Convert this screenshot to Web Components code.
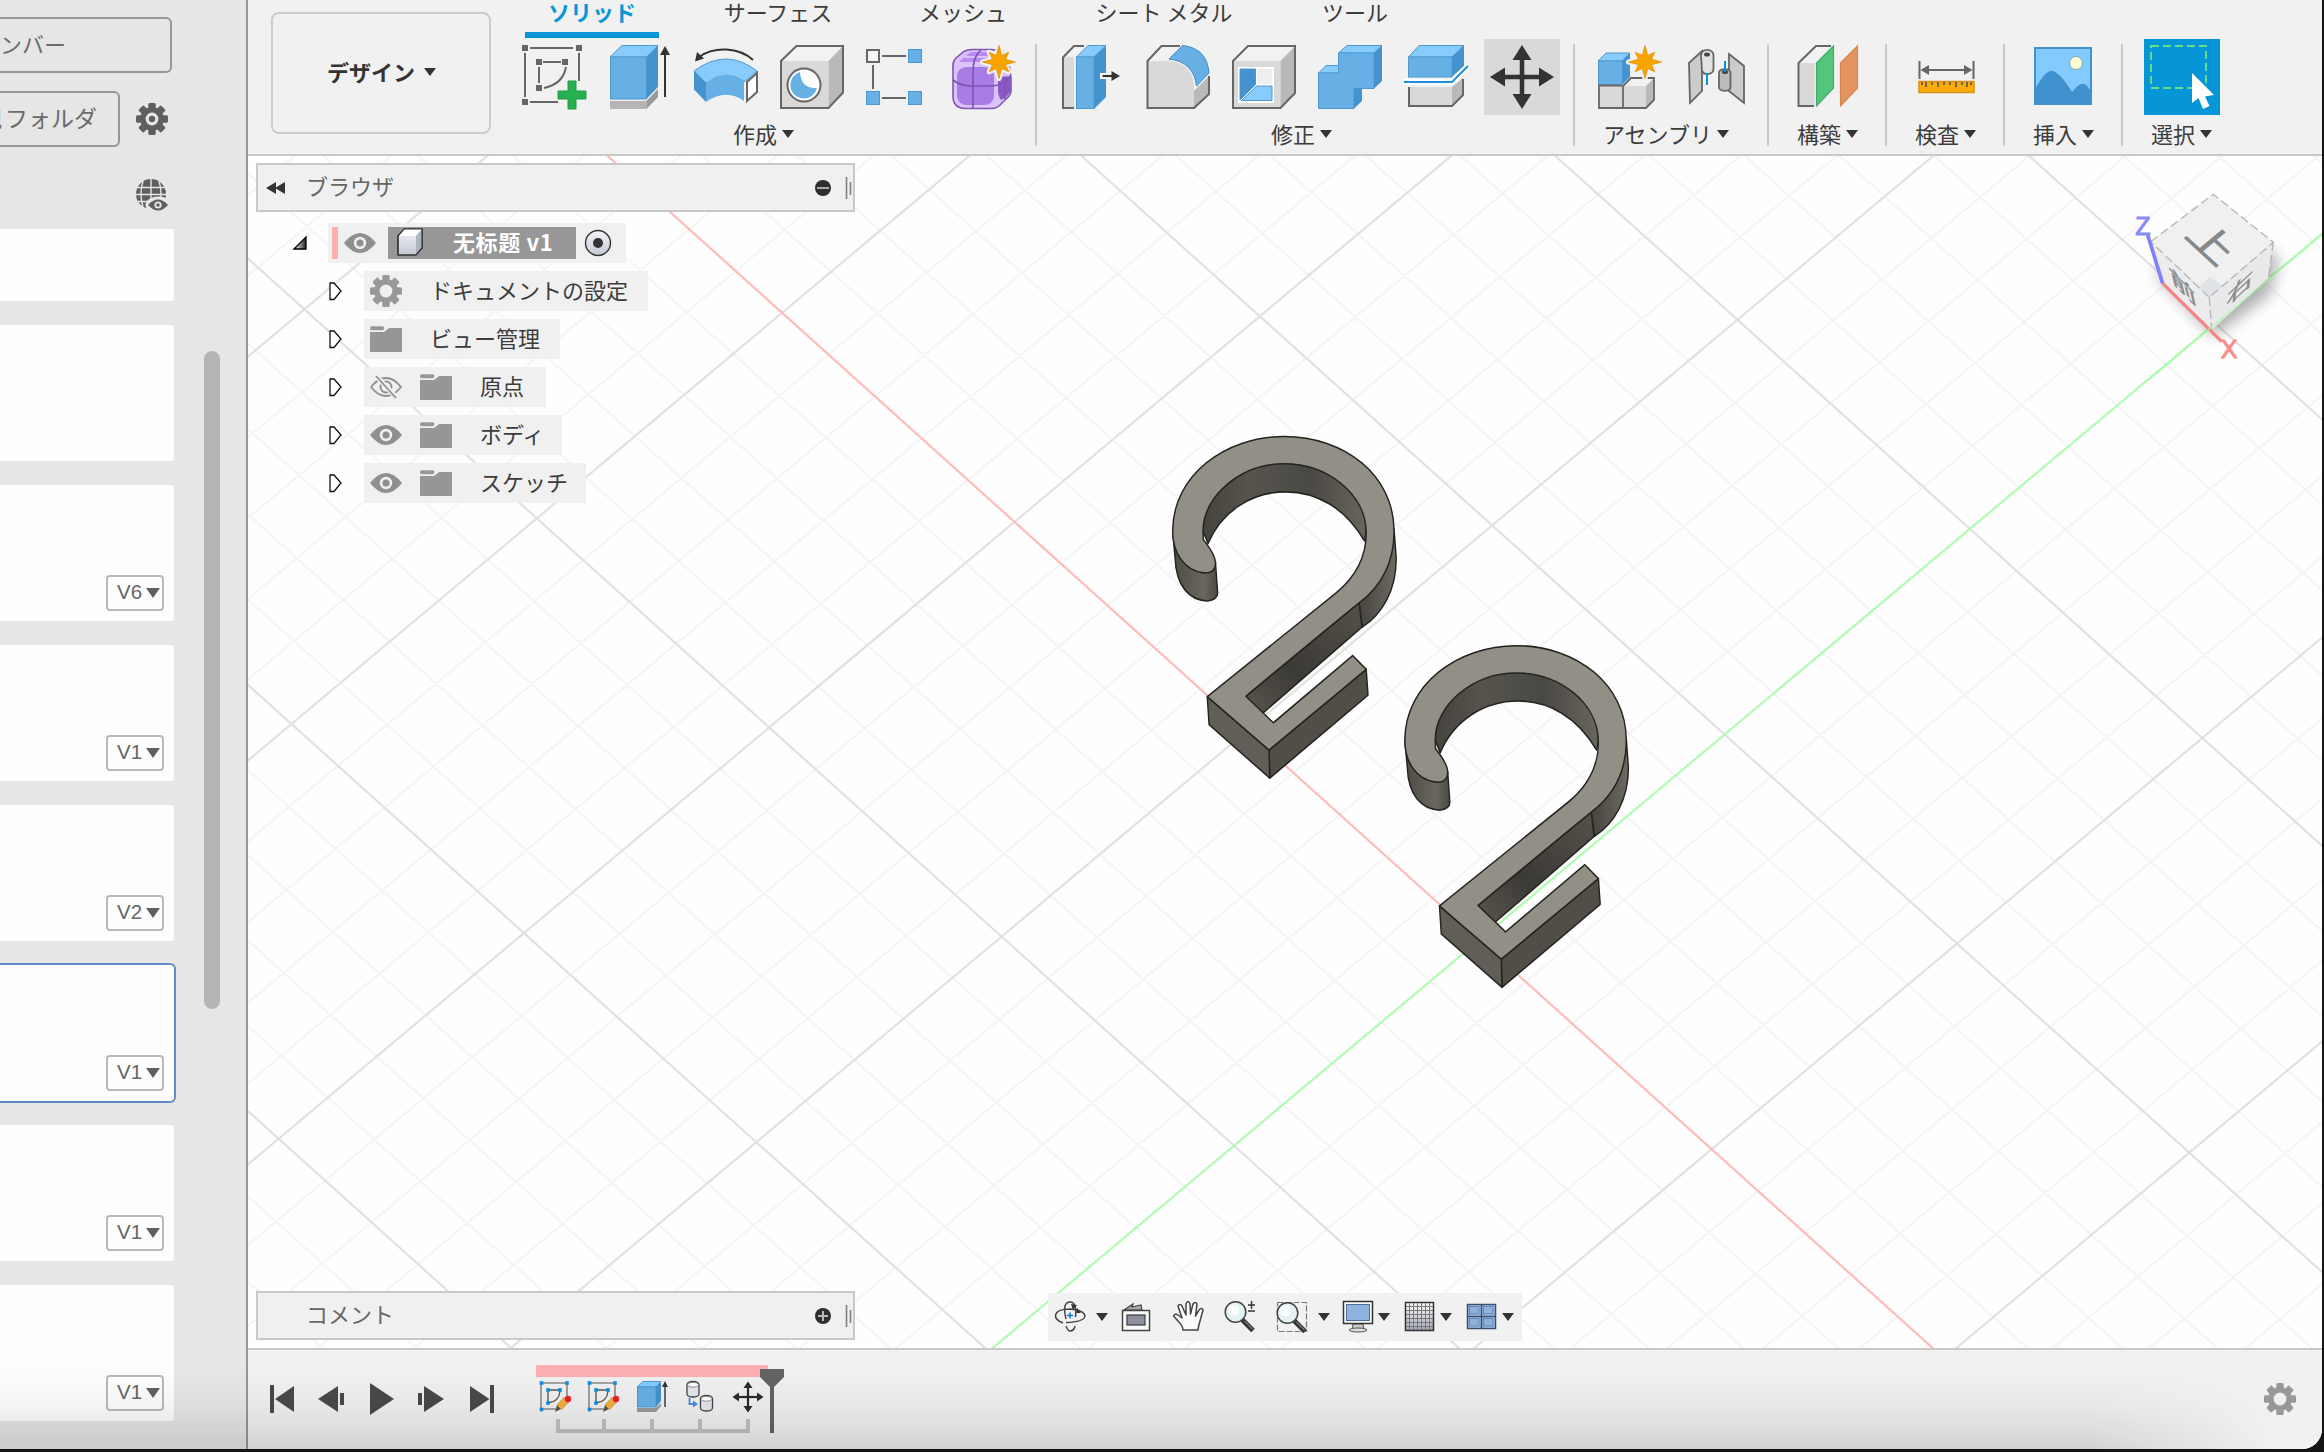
<!DOCTYPE html>
<html lang="ja">
<head>
<meta charset="utf-8">
<title>デザイン</title>
<style>
html,body{margin:0;padding:0;height:100%;overflow:hidden;background:#141414}
body{font-family:"Noto Sans CJK JP","Noto Sans",sans-serif;font-size:22px;color:#3c3c3c}
</style>
</head>
<body>
<cad-app></cad-app>
<script>
const define=(name,html,setup)=>customElements.define(name,class extends HTMLElement{
  connectedCallback(){
    if(this.shadowRoot)return;
    const t=document.createElement('template');
    t.innerHTML=typeof html==='function'?html(this):html;
    this.attachShadow({mode:'open'}).append(t.content.cloneNode(true));
    if(setup)setup(this,this.shadowRoot);
  }
});

/* ---------- drawing helpers ---------- */
const poly=(pts,fill,extra='')=>`<polygon points="${pts}" fill="${fill}" ${extra}/>`;
const rect=(x,y,w,h,fill,extra='')=>`<rect x="${x}" y="${y}" width="${w}" height="${h}" fill="${fill}" ${extra}/>`;
const line=(d,c='#666',w=2,extra='')=>`<path d="${d}" fill="none" stroke="${c}" stroke-width="${w}" ${extra}/>`;
const sq=(cx,cy,s,c)=>rect(cx-s/2,cy-s/2,s,s,c);
function star(cx,cy,R,r,n=8){
  let p='';
  for(let i=0;i<n*2;i++){const a=-Math.PI/2+i*Math.PI/n,k=i%2?r:(i%4?R*.84:R);p+=`${(cx+k*Math.cos(a)).toFixed(1)},${(cy+k*Math.sin(a)).toFixed(1)} `;}
  return poly(p,'#f9a300','stroke="#f1f1f1" stroke-width="5" stroke-linejoin="round"')+poly(p,'#f9a300','stroke="#e39200" stroke-width=".8"');
}
function gear(cx,cy,r,c,hole,ring){
  let t='';
  for(let i=0;i<8;i++)t+=`<rect x="${cx-r*.23}" y="${cy-r}" width="${r*.46}" height="${r}" rx="1.5" fill="${c}" transform="rotate(${i*45} ${cx} ${cy})"/>`;
  return t+`<circle cx="${cx}" cy="${cy}" r="${r*.74}" fill="${c}"/><circle cx="${cx}" cy="${cy}" r="${r*.4}" fill="${hole}"/>`+(ring?`<circle cx="${cx}" cy="${cy}" r="${r*.2}" fill="${c}"/>`:'');
}
const eye=(cx,cy,c='#8f8f8f',bg='#f0f0f0')=>`<path d="M${cx-16} ${cy}Q${cx-8} ${cy-10} ${cx} ${cy-10}T${cx+16} ${cy}Q${cx+8} ${cy+10} ${cx} ${cy+10}T${cx-16} ${cy}Z" fill="${c}"/><circle cx="${cx}" cy="${cy}" r="6.2" fill="${bg}"/><circle cx="${cx}" cy="${cy}" r="3.6" fill="${c}"/>`;
const tri=(x,y,w,h,c='#333')=>poly(`${x},${y} ${x+w},${y} ${x+w/2},${y+h}`,c);
const B='#67b0e6',BL='#88cbfd',BD='#4593ce',BS='stroke="#4d98d0" stroke-width="1"';
const G='#d9d9d9',GL='#f2f2f2',GD='#b9b9b9',K='#666';

const moveArrows=(cx,cy,R,hw,hl,t,c)=>{
  let s='';
  for(let i=0;i<4;i++)s+=`<g transform="rotate(${i*90} ${cx} ${cy})">${poly(`${cx},${cy-R} ${cx+hw},${cy-R+hl} ${cx-hw},${cy-R+hl}`,c)}${rect(cx-t/2,cy-R+hl-1,t,R-hl+1+t/2,c)}</g>`;
  return s;
};
const sketchSmall=x=>line(`M${x+1} 1383h26M${x+1} 1383v26h15M${x+27} 1383v14`,'#8a8a8a',1.6)
  +line(`M${x+8} 1390h12M${x+8} 1390v13Q${x+19} 1402 ${x+20} 1391`,'#555',1.3)
  +[[1.5,1383],[27,1383],[1.5,1409.5],[8,1390],[20,1390],[8,1403]].map(p=>sq(x+p[0],p[1],3.6,'#0d8fe0')).join('')
  +poly(`${x+15},1412 ${x+17},1405 ${x+21},1409`,'#555')+poly(`${x+17},1405 ${x+24.5},1397 ${x+29},1401.5 ${x+21.5},1409.5`,'#f3b13c','stroke="#c98a2a" stroke-width=".8"')
  +`<circle cx="${x+28}" cy="1399" r="3.2" fill="#e8222e"/>`;
const defsCube='<linearGradient id="cg" x2="0" y2="1"><stop stop-color="#f4f5f8"/><stop offset="1" stop-color="#c3c8d3"/></linearGradient>';
const lens=(cx,cy)=>`<path d="M${cx+7} ${cy+8}L${cx+17.5} ${cy+18.5}" stroke="#333" stroke-width="5"/><path d="M${cx+9} ${cy+9}L${cx+17} ${cy+17}" stroke="#777" stroke-width="1.5"/><circle cx="${cx}" cy="${cy}" r="10.3" fill="#e4f3f1" stroke="#444" stroke-width="1.5"/><circle cx="${cx-2}" cy="${cy-2}" r="5.5" fill="#fafdfd"/>`;

/* each entry: [viewBox, drawing] */
const ICONS={
 sketch:['500 39 98 76',
  line('M530 48H573M525 53V97M579 53V81M530 102H558M543 62H561M539 67V83M566 67Q563 84 544 88')+[[525,48],[579,48],[525,102],[539,62],[565,62],[539,88]].map(p=>sq(p[0],p[1],6,K)).join('')
  +poly('568,81 576,81 576,91 586,91 586,99 576,99 576,109 568,109 568,99 558,99 558,91 568,91','#27b050','stroke="#1f9a45" stroke-width="1"')],
 extrude:['598 39 84 76',
  poly('610,57 622,45.5 658,45.5 646.5,57',BL,BS)+rect(610.5,57,36,42,B,BS)+poly('646.5,57 658,45.5 658,87 646.5,99',BD)
  +rect(610,101,36.5,8,'#b5b5b5')+poly('646.5,101 658,89 658,97 646.5,109','#999')
  +line('M665 97V54','#333',2)+poly('665,46 670,55 660,55','#333')],
 revolve:['682 39 90 76',
  line('M753 60C739 47 714 46 699 57','#333',2)+poly('695,61.5 697,52 704,58.5','#333')
  +`<path d="M694 71Q726 47 757 71L745 81.5Q726 68 706 83Z" fill="${BL}" ${BS}/><path d="M706 83Q726 68 744 81.500V101Q726 88 706 102Z" fill="${B}"/>`
  +poly('694,71 706,83 706,102 694,89.500',BD)+poly('747,82 757,73 757,92 747,101','#fff','stroke="#666" stroke-width="2"')],
 hole:['772 39 86 76',
  poly('781,61 796,46 843,46 828,61',GL)+rect(781,61,47.5,47,G)+poly('828.5,61 843,46 843,92 828.5,108',GD)
  +line('M781 61L796.500 46H843V92.500L828.500 108H781Z')
  +`<circle cx="804" cy="85" r="17.500" fill="#666"/><circle cx="804" cy="85" r="15.500" fill="#fff"/><path d="M800 72A13.500 13.500 0 1 0 817 88Q801 89 800 72Z" fill="${B}"/>`],
 pattern:['858 39 80 76',
  line('M882 56H906M873 65V89M882 98H906')+rect(867,50,12,12,'#f6f6f6','stroke="#666" stroke-width="2"')
  +[[866.5,91.5],[908.5,49.5],[908.5,91.5]].map(p=>rect(p[0],p[1],13,13,B,BS)).join('')],
 form:['938 39 97 76',
  `<path d="M953 65Q953 61 956 58L964 51.500Q967 49.500 972 49.500H990Q1004 50 1008 56L1011 78V90Q1011 95 1007 98L999 106Q996 108.500 991 108.500H966Q953 108.500 953 96Z" fill="#dcc2fa" stroke="#7f55b5" stroke-width="1.600"/>
   <path d="M959 62L968 54Q970 52 974 52H990V62Z" fill="#b98bf2"/><path d="M965 57H992" stroke="#dcc2fa" stroke-width="2"/><rect x="957" y="67" width="37" height="38" rx="9" fill="#a97be4"/><path d="M998 77L1011 76V90Q1009 96 1001 100Q998 96 998 90Z" fill="#8a5ac4"/>
   <path d="M973 108V72Q973 56 981 50M953 80Q960 86 972 86H990Q1003 86 1011 77M1005 78V99" fill="none" stroke="#7f55b5" stroke-width="1.700"/>`+star(999,62,16.5,7)],
 presspull:['1037 39 96 76',
  poly('1063,57 1074,46 1085,46 1074,57',GL)+rect(1063,57,11,51,G)+line('M1074 108H1063V57.500L1074 46H1084')
  +poly('1076.5,57 1088,45.5 1106,45.500 1094,57',BL,BS)+rect(1076.5,57,17.5,51.5,B,BS)+poly('1094,57 1106,45.5 1106,97 1094,109',BD)
  +line('M1100 76H1114','#fff',6)+line('M1102.500 76H1113','#333',2.2)+poly('1111.5,71 1120,76 1111.5,81','#333')],
 fillet:['1133 39 86 76',
  `<path d="M1148 61L1161.500 46H1180L1167 60Z" fill="${GL}"/><path d="M1148 61H1168Q1194 63 1194 88V108H1148Z" fill="${G}"/><path d="M1194 91L1209 76V94L1194 108Z" fill="${GD}"/>`
  +line('M1180 46H1161.500L1147.500 61V108H1194L1209 94V76')+`<path d="M1169 59L1182.500 45.500Q1207 48 1209 73L1196.500 86Q1194 62 1169 59Z" fill="${B}" stroke="#3f8ac4" stroke-width="1"/>`],
 shell:['1219 39 86 76',
  poly('1233,61 1248,46 1295,46 1280,61',GL)+rect(1233,61,47.5,47,G)+poly('1280.500,61 1295,46 1295,93 1280.500,108',GD)
  +line('M1233 61L1248 46H1295V93L1280.500 108H1233Z')+rect(1238,67,36,36,'#fff')+rect(1257,69,15,15,'#eee')
  +poly('1240,69 1255.5,69 1255.5,84.500 1240,100',BD,BS)+poly('1256.5,86 1272,86 1272,100.500 1241.500,100.500',BL,BS)],
 combine:['1305 39 86 76',
  poly('1338.500,53 1347,45.500 1382,45.500 1374,53',BL,BS)+poly('1318.500,73 1326,65.500 1338.500,65.500 1338.500,73',BL,BS)
  +poly('1338.500,53 1374,53 1374,88.500 1354,88.500 1354,108.500 1318.500,108.500 1318.500,73 1338.500,73',B,BS)
  +poly('1374,53 1382,45.500 1382,81 1374,88.500',BD)+poly('1354,88.500 1362,88.500 1362,101 1354,108.500',BD)],
 split:['1391 39 85 76',
  poly('1408.500,57 1419,45.500 1464,45.500 1452,57',BL,BS)+rect(1408.500,57,43.500,20,B,BS)+poly('1452,57 1464,45.500 1464,66 1452,77',BD)
  +rect(1409,87,43,19,G)+poly('1452,87 1463,78 1463,95 1452,106',GD)+line('M1409 87V106H1452L1463 95V79')
  +line('M1404 82H1452L1468 66','#fff',6)+line('M1404 82H1452L1468 66','#1f8ee0',2)],
 move:['1476 39 97 76',rect(1484,39,76,76,'#d9d9d9')+moveArrows(1522,77,32,9.5,15,4.5,'#333')],
 component:['1575 39 99 76',
  poly('1598,61 1606,53 1630,53 1622,61',BL,BS)+rect(1598.500,61,24,24,B,BS)+poly('1622,61 1630,53 1630,77 1622,85',BD)
  +rect(1599,85,24,23,G)+poly('1623,86 1631,78 1654,78 1646,86',GL)+rect(1623,86,23,22,G)+poly('1646,86 1654,78 1654,100 1646,108',GD)
  +line('M1599 85V108H1646L1654 100V78H1631L1623 86V108M1599 85.500H1622','#666',1.8)+star(1645,62,16.5,7)],
 joint:['1674 39 93 76',
  poly('1689,63 1702,51 1702,91 1690,103','#ccc','stroke="#666" stroke-width="1.800"')+`<path d="M1701 55A6 5 0 0 1 1713.500 55V69A6 5 0 0 1 1702 71Z" fill="#e3e3e3" stroke="#666" stroke-width="1.800"/><ellipse cx="1707" cy="54.500" rx="3" ry="2" fill="#444"/>`
  +poly('1729,54 1744,66 1744,103 1729,91','#ccc','stroke="#666" stroke-width="1.800"')+`<path d="M1719 72A6 4 0 0 1 1730.500 72V88A6 4 0 0 1 1719 88Z" fill="#bbb" stroke="#666" stroke-width="1.800"/><ellipse cx="1725" cy="72" rx="3" ry="2" fill="#444"/>`
  +line('M1707 73V85M1725 61V72','#0a90dc',2)],
 construct:['1769 39 116 76',
  poly('1798.500,63 1816,46 1832,46 1815,63',GL)+rect(1798.500,63,16,43,G)+line('M1831 46H1816L1798.500 63V106H1814')
  +poly('1816.500,63 1833.500,46 1833.500,88 1816.500,106','#56c57c','stroke="#3fae66" stroke-width="1.200"')+poly('1840.500,63 1857.500,46 1857.500,88 1840.500,106','#e4955f','stroke="#d8834c" stroke-width="1.200"')],
 measure:['1887 39 116 76',
  line('M1919.500 61V79M1973.500 61V79')+line('M1925 70H1968')+poly('1920.500,70 1929,65 1929,75',K)+poly('1972.500,70 1964,65 1964,75',K)
  +rect(1919,81.500,55,11,'#fdab06','stroke="#d8921a" stroke-width="1.500"')+line('M1922 82V85M1926 82V87M1932 82V85M1938 82V87M1944 82V85M1950 82V85M1956 82V87M1962 82V85M1967 82V87M1971 82V85','#555',1.6)],
 insert:['2005 39 116 76',
  rect(2034.500,47.500,57,57,'#83cbff')+`<path d="M2035 89Q2046 69 2053 71Q2061 74 2072 92Q2080 82 2084 84Q2088 85 2092 94V105H2035Z" fill="#3f92ce"/>`
  +rect(2035,48,56,56,'none','stroke="#3f92ce" stroke-width="2"')+'<circle cx="2076" cy="63" r="6.500" fill="#fffed0" stroke="#7aabcb" stroke-width="1"/>'],
 select:['2123 39 196 76',
  rect(2144,39,76,76,'#0696d7')+line('M2151 46H2206V88H2151Z','#63dc8c',2,'stroke-dasharray="8 4"')+poly('2192,73 2214,95 2205,96.500 2209.500,106 2203,109 2198.500,98 2192,103','#fff')],
 gearSide:['136 103 32 32',gear(152,119,16,'#5f5f5f','#e6e6e6',true)],
 globe:['136 179 34 34',
  `<circle cx="151" cy="194" r="15" fill="#5f5f5f"/><path d="M136 187.500H166M136 194.500H166M138 201.500H164M151 179V209M143 181Q139 194 143 207M159 181Q163 194 159 207" fill="none" stroke="#e6e6e6" stroke-width="1.400"/><ellipse cx="158.500" cy="205" rx="13" ry="8.500" fill="#e6e6e6"/><path d="M148 205Q158 194 168 205Q158 216 148 205Z" fill="#5f5f5f"/><circle cx="158" cy="205" r="3.600" fill="#e6e6e6"/><circle cx="158" cy="205" r="1.800" fill="#5f5f5f"/>`],
 gearTree:['370 275 32 32',gear(386,291,16,'#989898','#f0f0f0')],
 gearEnd:['2264 1383 32 32',gear(2280,1399,16,'#989898','#efefef')],
 eye:['370 0 32 32',eye(386,16)],
 eyeOff:['370 0 32 32',line('M371 16Q378 7 386 7T401 16Q394 25 386 25T371 16','#8f8f8f',1.8)+`<circle cx="386" cy="16" r="5.500" fill="none" stroke="#8f8f8f" stroke-width="1.800"/>`+line('M376 5L397 27','#f0f0f0',5)+line('M376 5L396 27','#8f8f8f',1.8)],
 folder:['0 0 32 32','<path d="M0 7V29H32V5H19L14 9H0Z" fill="#969696"/><path d="M1 3H13L15 5L13 7.500H0V4Z" fill="#969696" stroke="#f0f0f0" stroke-width=".6"/>'],
 body:['395 227 30 32',defsCube+`<path d="M398 255V236L404 229H422V248L416 255Z" fill="url(#cg)" stroke="#333" stroke-width="1.200"/><path d="M404 229H422L416 236H398Z" fill="#fff"/><path d="M416 236L422 229V248L416 255Z" fill="#aeb4c2"/><path d="M398 255V236L404 229H422V248L416 255Z" fill="none" stroke="#333" stroke-width="1.200"/>`],
 radio:['584 228 28 28',defsCube+'<circle cx="598" cy="242" r="12.500" fill="url(#cg)" stroke="#333" stroke-width="1.400"/><circle cx="598" cy="242" r="5" fill="#333"/>'],
 orbit:['1048 1293 44 48',
  line('M1063 1323Q1055 1320 1055.500 1315Q1057 1309 1070 1309Q1084 1310 1085 1316Q1084 1322 1066 1322.500','#444',1.5)+line('M1066 1319Q1062 1302 1070 1302Q1077 1302 1075.500 1317M1066 1326Q1068 1331 1070 1331Q1074 1331 1075 1326','#444',1.5)
  +line('M1070 1312.500V1318.500M1067 1315.500H1073','#0b7fd6',1.6)+poly('1071,1304 1077,1305 1073,1310','#333')+poly('1077,1308 1081,1313 1076,1313','#333')],
 look:['1109 1293 54 48',
  poly('1124,1310 1133,1304 1132,1307 1141,1305 1142,1310','#aaa','stroke="#444" stroke-width="1.200"')+rect(1122.500,1310.500,27,20,'#fafafa','stroke="#444" stroke-width="1.500"')+rect(1127,1315,18,10,'#8b919d','stroke="#444" stroke-width="1.300"')],
 hand:['1163 1293 50 48','<path d="M1183 1330Q1183 1326 1178 1321L1173.500 1316Q1175 1313 1178 1315L1182 1318L1178 1306Q1180 1303 1182 1306L1186 1315L1186 1304Q1188 1299 1190 1304L1190.500 1314L1193 1304Q1195.500 1301 1197 1304L1195.500 1316L1199 1310Q1202 1307 1203 1310L1200 1321Q1198 1328 1198 1330Z" fill="#fbfbfb" stroke="#444" stroke-width="1.500" stroke-linejoin="round"/>'],
 zoom:['1213 1293 52 48',lens(1235.500,1312)+line('M1251.500 1301V1309M1248 1305H1255M1248 1311H1255','#333',1.4)],
 zoomWin:['1265 1293 49 48',rect(1277.500,1302.500,29,29,'none','stroke="#777" stroke-width="1.200" stroke-dasharray="6 2"')+lens(1287.500,1313)],
 monitor:['1334 1293 42 48',
  poly('1353,1324 1363,1324 1364,1330 1352,1330','#ccc','stroke="#555" stroke-width="1"')+'<ellipse cx="1358" cy="1330" rx="9" ry="2" fill="#ddd" stroke="#555" stroke-width="1"/>'+rect(1343.500,1301.500,29,22,'#fafafa','stroke="#333" stroke-width="1.500"')+rect(1346.500,1304.500,23,16,'#8fb2de','stroke="#4d6f9f" stroke-width="1"')],
 grid:['1394 1293 44 48',(()=>{let s='<linearGradient id="gg" x2="0" y2="1"><stop stop-color="#fff"/><stop offset="1" stop-color="#a5a8b4"/></linearGradient>'+rect(1405.500,1302.500,28,28,'url(#gg)','stroke="#333" stroke-width="1.500"');for(let i=1;i<7;i++)s+=line(`M${1405.5+i*4} 1303V1330M1406 ${1302.5+i*4}H1433`,'#777',1);return s})()],
 views:['1457 1293 43 48',
  rect(1467.500,1304.500,28,24,'#a7c2e4','stroke="#39506e" stroke-width="1.500"')+line('M1481.500 1305V1328M1468 1316.500H1495','#39506e',1.6)+[[1470,1307],[1484,1307],[1470,1319],[1484,1319]].map(p=>rect(p[0]-.5,p[1]-.5,9.500,7.500,'#8fb2dc','stroke="#5f86b8" stroke-width="1"')).join('')],
 tFirst:['270 1381 40 36',rect(270,1385,4,28,'#4a4a4a')+poly('275,1399 294,1386 294,1412','#4a4a4a')],
 tBack:['310 1381 46 36',poly('318,1399 338,1386 338,1412','#4a4a4a')+rect(340,1393,4,12,'#4a4a4a')],
 tPlay:['356 1381 50 36',poly('370,1383 394,1399 370,1415','#4a4a4a')],
 tFwd:['406 1381 50 36',rect(418,1393,4,12,'#4a4a4a')+poly('424,1386 444,1399 424,1412','#4a4a4a')],
 tLast:['456 1381 40 36',poly('470,1386 489.500,1399 470,1412','#4a4a4a')+rect(490,1385,4,28,'#4a4a4a')],
 history:['536 1361 256 76',
  rect(536,1365,232,12,'#fdaeb1')
  +sketchSmall(540)+sketchSmall(588)
  +poly('637,1387 643,1381.500 661,1381.500 656,1387',BL,BS)+rect(637.500,1387,18.500,20,B,BS)+poly('656,1387 661,1381.500 661,1401 656,1407',BD)+poly('637,1408 656,1408 661,1403 661,1406 656,1412 637,1412','#999')+line('M665 1407V1385','#333',1.4)+poly('665,1381 668,1387 662,1387','#333')
  +['687 1382','700.5 1396'].map(p=>{const [x,y]=p.split(' ').map(Number);return `<path d="M${x} ${y+2.500}A6 3 0 0 1 ${x+12} ${y+2.500}V${y+12}A6 3 0 0 1 ${x} ${y+12}Z" fill="#e6e7ec" stroke="#444" stroke-width="1.300"/><ellipse cx="${x+6}" cy="${y+2.800}" rx="5.500" ry="2.400" fill="#fff" stroke="#777" stroke-width=".8"/>`}).join('')
  +line('M689.500 1398V1404H694','#4a86e8',1.8)+poly('693,1400.500 698,1404 693,1407.500','#4a86e8')
  +moveArrows(748,1397,15.5,4.5,6.5,2.2,'#2b2b2b')
  +[556,602,650,698,746].map(x=>rect(x,1419,4,11,'#c1c1c1')).join('')+rect(556,1429,194,4,'#c1c1c1')
  +rect(770,1380,4,53,'#646464')+poly('760,1369 784,1369 784,1377 774,1387 770,1387 760,1377','#646464')],
 rewind:['266 181 20 16',poly('266,189 276,183 276,195','#333')+poly('275,189 285,183 285,195','#333')],
 minus:['815 180 16 16','<circle cx="823" cy="188" r="8" fill="#2e2e2e"/>'+rect(817,187,12,2,'#aaa')],
 plus:['815 180 16 16','<circle cx="823" cy="188" r="8" fill="#2e2e2e"/>'+rect(818,187,10,2,'#bbb')+rect(822,183,2,10,'#bbb')],
 grip:['846 176 8 24',line('M847.500 177V199M851.500 182V195','#808080',1.6)],
 caret:['0 0 12 8',tri(0,0,12,8)],
 caretS:['0 0 14 10',tri(0,0,14,10,'#606060')],
 closed:['329 280 14 22',poly('331,283 335,283 342,291 335,299.500 331,299.500','#fff','stroke="#111" stroke-width="1.300"')],
 open:['292 235 16 17','<linearGradient id="og"><stop stop-color="#fff"/><stop offset="1" stop-color="#222"/></linearGradient>'+poly('294,249 306,237 306,249','url(#og)','stroke="#000" stroke-width="1.300"')]
};
define('ui-icon',el=>{
  const [vb,g]=ICONS[el.getAttribute('name')];const [, ,w,h]=vb.split(' ');
  return `<style>:host{display:block;flex:none;width:${w}px;height:${h}px}svg{display:block}</style><svg width="${w}" height="${h}" viewBox="${vb}">${g}</svg>`;
});

/* ---------- side panel ---------- */
define('side-button',`<style>:host{display:flex;justify-content:flex-end;box-sizing:border-box;height:56px;border:2px solid #969696;border-left:0;border-radius:0 6px 6px 0;color:#6b6b6b;line-height:48px;overflow:hidden;white-space:nowrap}span{flex:none}</style><span><slot></slot></span>`);
define('file-card',el=>`<style>
:host{display:flex;flex:none;box-sizing:border-box;width:174px;height:136px;background:#fdfdfd;border-radius:0 4px 4px 0;align-items:flex-end;justify-content:flex-end;padding:10px}
:host([short]){height:72px;border-radius:0 0 4px 0}
:host([selected]){width:176px;height:140px;margin:-2px 0;border:2px solid #6089c6;border-left:0;border-radius:0 6px 6px 0}
div{display:flex;box-sizing:border-box;width:58px;height:36px;border:2px solid #b9b9b9;border-radius:4px;align-items:center;padding-left:9px;gap:4px;font:20.500px "Liberation Sans",sans-serif;color:#666}
b{font-weight:400;width:25px;margin-top:-2px}</style>${el.hasAttribute('v')?`<div><b>${el.getAttribute('v')}</b><ui-icon name="caretS"></ui-icon></div>`:''}`);
define('side-panel',`<style>
:host{display:flex;flex:none;width:246px;height:1449px;background:#e6e6e6;border-right:2px solid #969696;overflow:hidden}
.main{width:204px;display:flex;flex-direction:column;flex:none}
.r1{width:172px;margin-top:17px}.row{display:flex;gap:16px;align-items:center;margin-top:18px}.r2{width:120px}
.globe{margin:32px 0 16px 136px}
.list{display:flex;flex-direction:column;gap:24px}
.bar{width:16px;height:658px;border-radius:8px;background:#b5b5b5;margin-top:351px}</style>
<div class="main"><side-button class="r1" style="padding-right:104px">ンバー</side-button>
<div class="row"><side-button class="r2" style="padding-right:21px;font-size:23px"><i style="font-style:normal;margin-right:3px">規</i>フォルダ</side-button><ui-icon name="gearSide"></ui-icon></div>
<ui-icon class="globe" name="globe"></ui-icon>
<div class="list"><file-card short></file-card><file-card></file-card><file-card v="V6"></file-card><file-card v="V1"></file-card><file-card v="V2"></file-card><file-card selected v="V1"></file-card><file-card v="V1"></file-card><file-card v="V1"></file-card></div></div>
<div class="bar"></div>`);

/* ---------- ribbon ---------- */
define('ribbon-tab',`<style>:host{display:block;flex:none;box-sizing:border-box;height:38px;line-height:22px;white-space:pre;text-align:center;border-bottom:6px solid transparent}
:host([active]){color:#0696d7;font-weight:700;border-color:#0696d7}</style><slot></slot>`);
define('ribbon-group',el=>`<style>:host{display:flex;flex-direction:column;flex:none}
.i{display:flex}.l{display:flex;align-items:center;height:36px;line-height:36px;gap:5px;padding-left:${el.getAttribute('inset')}px;white-space:nowrap}
ui-icon[name=caret]{margin-top:1px}</style><div class="i">${el.getAttribute('icons').split(' ').map(n=>`<ui-icon name="${n}"></ui-icon>`).join('')}</div><div class="l"><span style="margin-top:-1px"><slot></slot></span><ui-icon name="caret"></ui-icon></div>`);
define('ribbon-bar',`<style>
:host{display:flex;flex:none;height:156px;background:#f1f1f1;border-bottom:2px solid #c9c9c9;box-sizing:border-box;overflow:hidden}
.ws{display:flex;flex:none;box-sizing:border-box;width:220px;height:122px;margin:12px 9px 0 23px;border:2px solid #ccc;border-radius:8px;align-items:center;padding-left:54px;gap:9px;font-weight:700;font-size:22px;padding-bottom:5px;color:#333}
.ws ui-icon{margin-top:3px}
.c{display:flex;flex-direction:column}.tabs,.groups{display:flex}.tabs{height:39px}.sep{flex:none;width:2px;height:102px;margin-top:5px;background:#c9c9c9}</style>
<div class="ws">デザイン<ui-icon name="caret"></ui-icon></div>
<div class="c"><div class="tabs">
<ribbon-tab active style="width:134px;margin-left:25px">ソリッド</ribbon-tab><ribbon-tab style="width:110px;margin-left:64px">サーフェス</ribbon-tab><ribbon-tab style="width:88px;margin-left:86px">メッシュ</ribbon-tab><ribbon-tab style="width:138px;margin-left:88px">シート メタル</ribbon-tab><ribbon-tab style="width:66px;margin-left:89px">ツール</ribbon-tab></div>
<div class="groups">
<ribbon-group inset="233" icons="sketch extrude revolve hole pattern form">作成</ribbon-group><div class="sep"></div>
<ribbon-group inset="234" icons="presspull fillet shell combine split move">修正</ribbon-group><div class="sep"></div>
<ribbon-group inset="28" icons="component joint">アセンブリ</ribbon-group><div class="sep"></div>
<ribbon-group inset="28" icons="construct">構築</ribbon-group><div class="sep"></div>
<ribbon-group inset="28" icons="measure">検査</ribbon-group><div class="sep"></div>
<ribbon-group inset="28" icons="insert">挿入</ribbon-group><div class="sep"></div>
<ribbon-group inset="28" icons="select">選択</ribbon-group></div></div>`);

/* ---------- canvas ---------- */
function sceneGrid(){
  const O=[1479.3,940.1],a=[232.4,209.1],b=[-245.3,205.6];let minor='',major='';
  const P=(i,j)=>`${(O[0]+i*a[0]+j*b[0]).toFixed(1)} ${(O[1]+i*a[1]+j*b[1]).toFixed(1)}`;
  for(let k=-45;k<=45;k++){if(k===0)continue;const t=k/5,d=`M${P(t,-9)}L${P(t,9)}M${P(-9,t)}L${P(9,t)}`;if(k%5)minor+=d;else major+=d;}
  return line(minor,'#f5f5f5',2.2)+line(major,'#e1e1e1',2.2)+line(`M${P(0,-9)}L${P(0,9)}`,'#b0fbb0',2.2)+line(`M${P(-9,0)}L${P(9,0)}`,'#ffbaba',2.2);
}
const HOOK=`<g stroke="#24231f" stroke-width="4" stroke-linejoin="round">
<path d="M203 330A228 172 0 0 1 660 330L655 355C600 270 520 231 435 231C340 231 255 280 217 362Z" fill="url(#arc)"/>
<path d="M118 330L125 400C128 470 165 505 215 507C235 505 244 498 244 487L238 410Z" fill="url(#tip)"/>
<path d="M738 325L744 400C744 480 705 540 649 573L640 512Z" fill="url(#rim)"/>
<path d="M640 512L648 573L370 791L323 748Z" fill="url(#bar)"/>
<path d="M388 884L390 955L665 745L660 680Z" fill="#514e47"/><path d="M215 749L220 820L390 955L388 884Z" fill="#605e56"/>
<path d="M118 330C118 190 265 91 430 91C600 91 738 190 738 330C738 410 705 468 640 512C540 585 430 668 323 748L400 815L622 645L660 680L388 884L215 749L575 487C625 450 660 400 660 335C660 235 550 160 430 160C310 160 203 240 203 330L204 352C222 372 239 396 238 412C237 430 225 438 205 436C150 430 118 385 118 330Z" fill="#929086"/>
</g>`;
define('model-view',`<style>:host{display:block}svg{display:block}</style><svg width="2074" height="1192" viewBox="248 156 2074 1192">
<defs><linearGradient id="arc"><stop stop-color="#45433d"/><stop offset=".3" stop-color="#56544d"/><stop offset=".65" stop-color="#4a4843"/><stop offset="1" stop-color="#68655d"/></linearGradient>
<linearGradient id="tip"><stop stop-color="#4d4b45"/><stop offset=".7" stop-color="#69675f"/><stop offset="1" stop-color="#4b4943"/></linearGradient>
<linearGradient id="rim"><stop stop-color="#46443e"/><stop offset="1" stop-color="#6c6a62"/></linearGradient>
<linearGradient id="bar" x1="0" y1="1" x2="1" y2="0"><stop stop-color="#5a5750"/><stop offset=".4" stop-color="#3c3a35"/><stop offset="1" stop-color="#54514a"/></linearGradient>
<filter id="soft" x="-30%" y="-30%" width="160%" height="160%"><feGaussianBlur stdDeviation="8"/></filter></defs>
<rect x="248" y="156" width="2074" height="1192" fill="#fefefe"/>${sceneGrid()}
<g transform="matrix(.35714 0 0 .3954 1130.500 400.500)">${HOOK}</g><g transform="matrix(.35714 0 0 .3954 1362.700 609.700)">${HOOK}</g>
<polygon points="2156,274 2212,232 2278,256 2270,294 2214,336" fill="#000" opacity=".32" filter="url(#soft)"/>
<g transform="matrix(.33333 0 0 .33333 2080 160)">
<polygon points="212,245 388,412 395,510 248,370" fill="#ececec"/><polygon points="388,412 580,247 565,355 395,510" fill="#e9e9e9"/><polygon points="400,103 580,247 388,412 212,245" fill="#f0f0f0"/>
<polygon points="390,350 428,378 390,410 358,380" fill="#dfe2e7"/>
<path d="M212 245L400 103L580 247L388 412ZM388 412L395 510M580 247L565 355" fill="none" stroke="#b5b5b5" stroke-width="4" stroke-dasharray="26 12"/>
<path d="M203 225L248 370" stroke="#8080f8" stroke-width="11"/><path d="M248 370L425 545" stroke="#f58585" stroke-width="10"/><path d="M205 660L727 223" stroke="#a6fba6" stroke-width="5" opacity=".6"/></g>
<g font-family="Noto Sans CJK JP,sans-serif" fill="#85888a" text-anchor="middle">
<text transform="matrix(.733 .675 -.6 .5 2212 243)" font-size="48" y="18" stroke="#85888a" stroke-width=".8">上</text>
<text transform="matrix(.75 .75 .15 .6 2183 287)" font-size="36" y="13" stroke="#85888a">前</text><text transform="matrix(.75 -.7 -.05 .55 2240 288)" font-size="36" y="13" stroke="#85888a" stroke-width=".6">右</text></g>
<g font-family="Liberation Sans,sans-serif" font-size="25" text-anchor="middle"><text x="2143" y="235" fill="#8b8bfa" stroke="#8b8bfa">Z</text><text x="2229" y="358" fill="#fa8b8b" stroke="#fa8b8b">X</text></g>
</svg>`);
define('panel-header',el=>`<style>:host{display:flex;flex:none;box-sizing:border-box;width:599px;height:49px;border:2px solid #c9c9c9;background:#f0f0f0;align-items:center;color:#666}
.a{width:20px;margin:1px 20px 0 8px}.t{flex:1;margin-top:-6px;line-height:30px}ui-icon.g{margin-left:14px}</style><div class="a">${el.hasAttribute('arrows')?'<ui-icon name="rewind"></ui-icon>':''}</div><div class="t"><slot></slot></div><ui-icon name="${el.getAttribute('toggle')}"></ui-icon><ui-icon class="g" name="grip"></ui-icon>`);
define('tree-row',el=>`<style>:host{display:flex;align-items:center;height:40px;padding-left:72px}
.b{display:flex;box-sizing:border-box;align-items:center;height:40px;margin-left:22px;padding-left:6px;background:#f0f0f0;width:${el.getAttribute('w')}px;gap:18px;white-space:nowrap}
.t{margin:-5px 0 0 10px;line-height:36px}</style><ui-icon name="closed"></ui-icon><div class="b">${el.getAttribute('icons').split(' ').map(n=>`<ui-icon name="${n}"></ui-icon>`).join('')}<div class="t"><slot></slot></div></div>`);
define('tree-root',`<style>:host{display:flex;align-items:center;height:40px;padding-left:36px}
.b{display:flex;box-sizing:border-box;align-items:center;width:298px;height:40px;margin-left:20px;padding-left:4px;background:#f0f0f0}
.p{width:6px;height:32px;background:#fdaeb1;margin-right:6px}
.n{display:flex;box-sizing:border-box;align-items:center;width:188px;height:32px;background:#979797;margin:0 8px 0 12px;padding-left:7px;gap:28px;color:#fff;font:700 22px "Noto Sans CJK SC",sans-serif;line-height:28px;letter-spacing:.6px;white-space:nowrap}span{margin-top:-4px}</style>
<ui-icon name="open"></ui-icon><div class="b"><div class="p"></div><ui-icon name="eye"></ui-icon><div class="n"><ui-icon name="body"></ui-icon><span><slot></slot></span></div><ui-icon name="radio"></ui-icon></div>`);
define('view-tools',`<style>:host{display:flex;flex:none;align-items:center;width:474px;height:48px;background:#f1f1f1}.c{margin:0 4px}</style>
<ui-icon name="orbit"></ui-icon><ui-icon name="caret" class="c"></ui-icon><ui-icon name="look" style="margin-left:-3px"></ui-icon><ui-icon name="hand"></ui-icon><ui-icon name="zoom"></ui-icon><ui-icon name="zoomWin"></ui-icon><ui-icon name="caret" class="c"></ui-icon><ui-icon name="monitor"></ui-icon><ui-icon name="caret" style="margin:0 4px 0 2px"></ui-icon><ui-icon name="grid"></ui-icon><ui-icon name="caret" style="margin:0 5px 0 2px"></ui-icon><ui-icon name="views"></ui-icon><ui-icon name="caret" style="margin-left:2px"></ui-icon>`);
define('work-area',`<style>:host{display:grid;flex:none;height:1192px;overflow:hidden}
.o{grid-area:1/1;display:flex;flex-direction:column;padding:7px 0 8px 8px;box-sizing:border-box;height:1192px;z-index:1}model-view{grid-area:1/1}
.tree{display:flex;flex-direction:column;gap:8px;margin-top:11px;flex:1}.foot{display:flex;gap:193px;align-items:flex-end}view-tools{margin-bottom:-1px}</style>
<model-view></model-view><div class="o"><panel-header arrows toggle="minus">ブラウザ</panel-header>
<div class="tree"><tree-root>无标题 v1</tree-root><tree-row w="284" icons="gearTree">ドキュメントの設定</tree-row><tree-row w="196" icons="folder">ビュー管理</tree-row><tree-row w="182" icons="eyeOff folder">原点</tree-row><tree-row w="198" icons="eye folder">ボディ</tree-row><tree-row w="222" icons="eye folder">スケッチ</tree-row></div>
<div class="foot"><panel-header toggle="plus">コメント</panel-header><view-tools></view-tools></div></div>`);
define('time-line',`<style>:host{display:flex;flex:1;box-sizing:border-box;align-items:center;border-top:2px solid #c9c9c9;background:#f1f1f1;padding:0 26px 1px 22px}
.p{display:flex;margin-right:40px}.s{flex:1}</style><div class="p"><ui-icon name="tFirst"></ui-icon><ui-icon name="tBack"></ui-icon><ui-icon name="tPlay"></ui-icon><ui-icon name="tFwd"></ui-icon><ui-icon name="tLast"></ui-icon></div><ui-icon name="history"></ui-icon><div class="s"></div><ui-icon name="gearEnd"></ui-icon>`);
define('cad-app',`<style>:host{display:flex;width:2322px;height:1449px;overflow:hidden;border-radius:0 0 20px 0;position:relative;background:#f1f1f1}
main{display:flex;flex-direction:column;width:2074px;height:1449px}
.shade{position:absolute;left:0;bottom:0;width:100%;height:80px;pointer-events:none;z-index:2;background:linear-gradient(rgba(0,0,0,0),rgba(0,0,0,.035) 45%,rgba(0,0,0,.12));-webkit-mask-image:linear-gradient(90deg,#000 90%,transparent 98%);mask-image:linear-gradient(90deg,#000 90%,transparent 98%)}</style>
<side-panel></side-panel><main><ribbon-bar></ribbon-bar><work-area></work-area><time-line></time-line></main><div class="shade"></div>`);
</script>
</body>
</html>
